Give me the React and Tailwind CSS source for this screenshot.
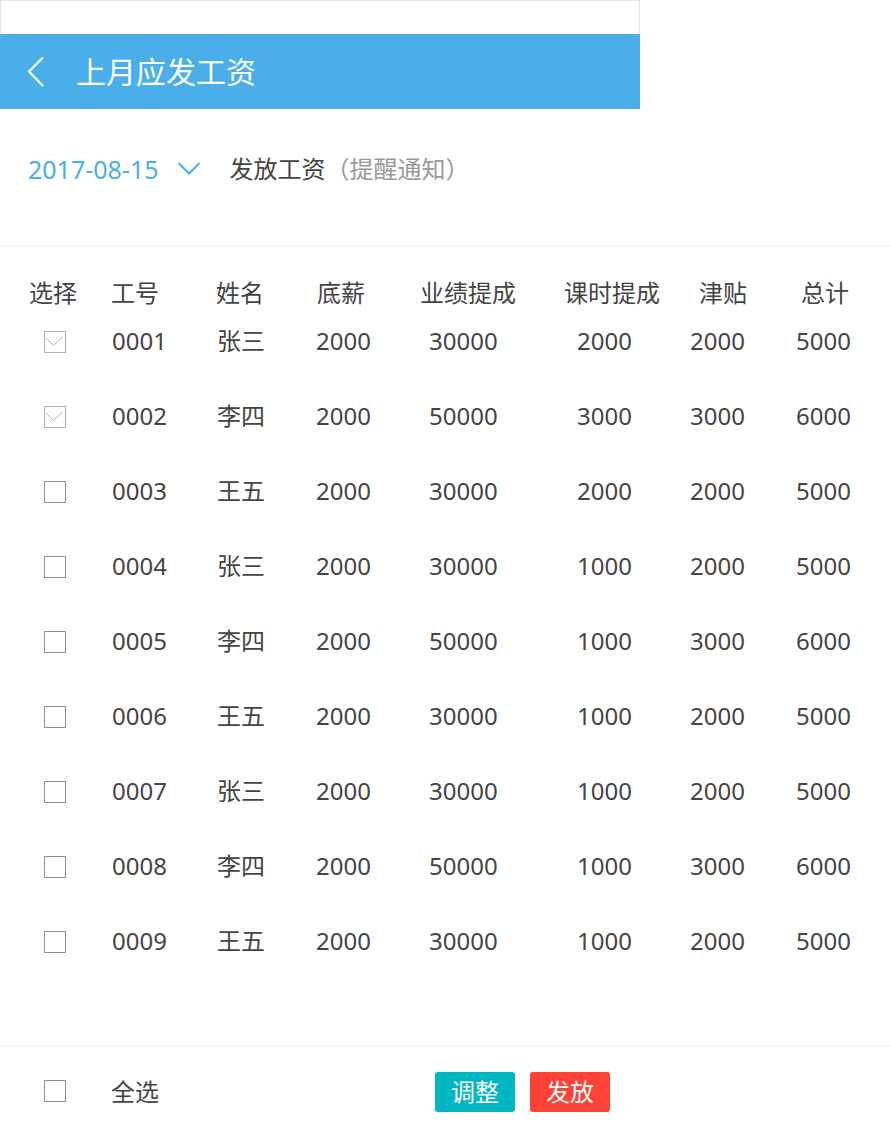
import React from "react";

const rows = [
  { id: "0001", name: "张三", base: 2000, perf: 30000, lesson: 2000, allow: 2000, total: 5000, checked: true },
  { id: "0002", name: "李四", base: 2000, perf: 50000, lesson: 3000, allow: 3000, total: 6000, checked: true },
  { id: "0003", name: "王五", base: 2000, perf: 30000, lesson: 2000, allow: 2000, total: 5000 },
  { id: "0004", name: "张三", base: 2000, perf: 30000, lesson: 1000, allow: 2000, total: 5000 },
  { id: "0005", name: "李四", base: 2000, perf: 50000, lesson: 1000, allow: 3000, total: 6000 },
  { id: "0006", name: "王五", base: 2000, perf: 30000, lesson: 1000, allow: 2000, total: 5000 },
  { id: "0007", name: "张三", base: 2000, perf: 30000, lesson: 1000, allow: 2000, total: 5000 },
  { id: "0008", name: "李四", base: 2000, perf: 50000, lesson: 1000, allow: 3000, total: 6000 },
  { id: "0009", name: "王五", base: 2000, perf: 30000, lesson: 1000, allow: 2000, total: 5000 },
];

const headers = ["选择", "工号", "姓名", "底薪", "业绩提成", "课时提成", "津贴", "总计"];

const Checkbox = ({ checked }) =>
  checked ? (
    <div className="h-[22px] w-[22px] border border-[#b0b0b0] bg-white">
      <svg width="20" height="20" viewBox="0 0 20 20" fill="none">
        <path d="M1.5 6.5 L8.5 13.5 L18 4.5" stroke="#b0b0b0" strokeWidth="1" />
      </svg>
    </div>
  ) : (
    <div className="h-[22px] w-[22px] border border-[#8f8f8f] bg-white" />
  );

export default function App() {
  const [data, setData] = React.useState(rows);
  const allChecked = data.every((r) => r.checked);

  const toggle = (i) => () =>
    setData((prev) => prev.map((r, idx) => (idx === i ? { ...r, checked: !r.checked } : r)));

  return (
    <div
      className="min-h-[1136px] w-[890px] bg-white text-[#444]"
      style={{ fontFamily: '"Noto Sans", "Noto Sans CJK SC", sans-serif' }}
    >
      <div className="h-[34px] w-[640px] border border-b-0 border-[#e6e6e6]" />
      <div className="flex h-[75px] w-[640px] items-center bg-[#4aaeea]">
        <svg width="20" height="32" viewBox="0 0 20 32" className="ml-[26px]" fill="none">
          <path d="M17 1.5 L3 15.5 L17 30" stroke="#fff" strokeWidth="2.2" />
        </svg>
        <h1 className="ml-[30px] text-[30px] leading-none text-white">上月应发工资</h1>
      </div>

      <div className="flex h-[137px] items-start border-b border-[#ececec] pl-[28px] pt-[44px]">
        <span className="text-[25px] leading-[32px] text-[#4aaeea]">2017-08-15</span>
        <svg width="24" height="16" viewBox="0 0 24 16" className="ml-[18px] mt-[8px]" fill="none">
          <path d="M1.5 2 L12 12.5 L22.5 2" stroke="#4aaeea" strokeWidth="2" />
        </svg>
        <span className="ml-[29px] text-[24px] leading-[32px] text-[#444]">
          发放工资<span className="text-[#999]">（提醒通知）</span>
        </span>
      </div>

      <div className="grid grid-cols-[82px_105px_101px_103px_144px_135px_102px_1fr] pl-[29px] pt-[35px] text-[24px] leading-[24px] text-[#444]">
        {headers.map((h) => (
          <div key={h} className="whitespace-nowrap">
            {h}
          </div>
        ))}
      </div>

      <div className="-mt-[2px] h-[742px]">
        {data.map((r, i) => (
          <div
            key={r.id}
            className="grid h-[75px] grid-cols-[68px_105px_99px_113px_148px_113px_106px_1fr] items-center pl-[44px] text-[24px] text-[#444]"
          >
            <button type="button" onClick={toggle(i)} className="mt-[2px] cursor-pointer">
              <Checkbox checked={r.checked} />
            </button>
            <div>{r.id}</div>
            <div>{r.name}</div>
            <div>{r.base}</div>
            <div>{r.perf}</div>
            <div>{r.lesson}</div>
            <div>{r.allow}</div>
            <div>{r.total}</div>
          </div>
        ))}
      </div>

      <div className="flex h-[91px] items-start border-t border-[#ececec] pl-[44px] pt-[26px]">
        <button
          type="button"
          className="mt-[8px] cursor-pointer"
          onClick={() => setData((prev) => prev.map((r) => ({ ...r, checked: !allChecked })))}
        >
          <Checkbox checked={false} />
        </button>
        <span className="ml-[45px] mt-[4px] text-[24px] leading-[32px] text-[#444]">全选</span>
        <button
          type="button"
          className="ml-[276px] h-[40px] w-[80px] rounded-[3px] bg-[#00b6c2] text-[24px] leading-none text-white"
        >
          调整
        </button>
        <button
          type="button"
          className="ml-[15px] h-[40px] w-[80px] rounded-[3px] bg-[#ff4136] text-[24px] leading-none text-white"
        >
          发放
        </button>
      </div>
    </div>
  );
}
